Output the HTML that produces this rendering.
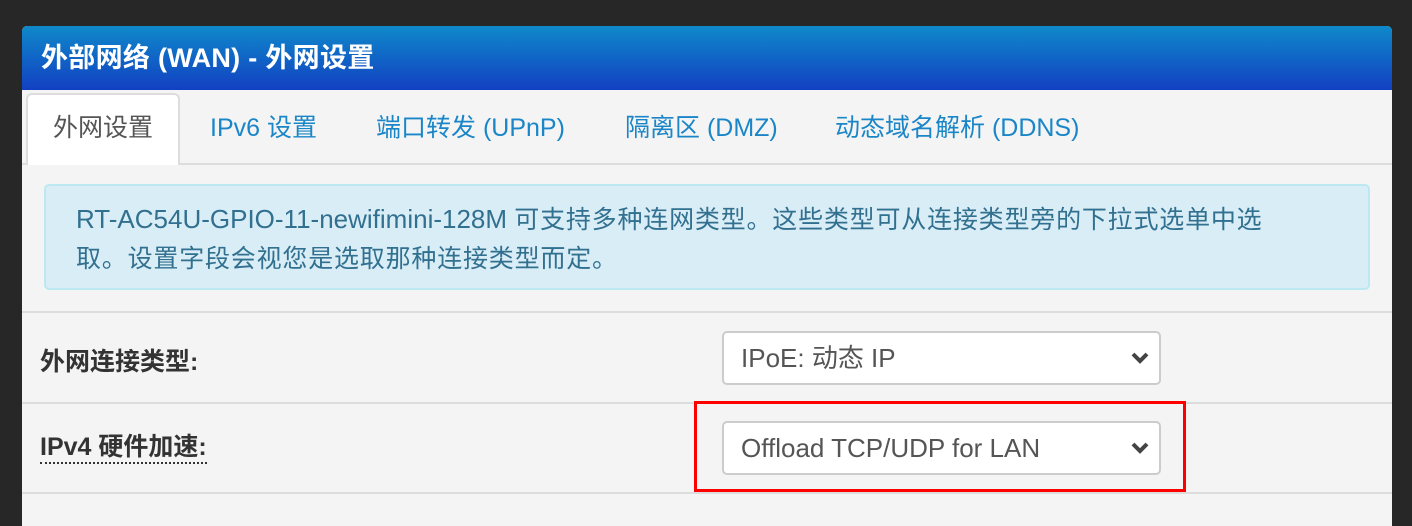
<!DOCTYPE html>
<html><head><meta charset="utf-8"><style>
body{margin:0;width:1412px;height:502px;background:#272727;overflow:hidden;font-family:"Liberation Sans","Noto Sans CJK SC",sans-serif;}
.panel{position:absolute;left:22px;top:26px;width:1370px;height:500px;background:#f4f4f4;border-radius:5px 5px 0 0;overflow:hidden}
.hdr{height:64px;background:linear-gradient(#0f89ca,#1240c2);color:#fff;font-weight:bold;font-size:27px;line-height:64px;padding-left:19px;letter-spacing:0.3px}
.tabs{position:absolute;top:64px;left:0;right:0;height:73px;border-bottom:2px solid #ddd}
.tab{position:absolute;top:18px;font-size:25px;color:#1a86c8}
.act{position:absolute;left:4px;top:3px;width:154px;height:72px;background:#fff;border:2px solid #ddd;border-bottom:none;border-radius:6px 6px 0 0;box-sizing:border-box;color:#555;font-size:25px;text-align:center;line-height:66px}
.alert{position:absolute;left:22px;top:158px;width:1326px;height:106px;box-sizing:border-box;background:#d9edf7;border:2px solid #bce8f1;border-radius:5px;color:#31708f;font-size:26px;line-height:38px;padding:14px 0 14px 30px;white-space:nowrap}
.alert .c{font-size:25px;letter-spacing:0.8px}
.hr{position:absolute;left:0;right:0;height:2px;background:#ddd}
.lbl{position:absolute;left:18px;font-size:25px;font-weight:bold;color:#333}
.sel{position:absolute;left:700px;width:439px;height:54px;box-sizing:border-box;background:#fff;border:2px solid #ccc;border-radius:5px;font-size:26px;color:#555;line-height:50px;padding-left:17px}
.sel svg{position:absolute;right:9px;top:18px}
.red{position:absolute;left:694px;top:401px;width:492px;height:91px;box-sizing:border-box;border:3px solid #f00}
</style></head><body>
<div class="panel">
<div class="hdr">外部网络 (WAN) - 外网设置</div>
<div class="tabs">
<div class="act">外网设置</div>
<div class="tab" style="left:188px">IPv6 设置</div>
<div class="tab" style="left:354px">端口转发 (UPnP)</div>
<div class="tab" style="left:603px">隔离区 (DMZ)</div>
<div class="tab" style="left:813px">动态域名解析 (DDNS)</div>
</div>
<div class="alert">RT-AC54U-GPIO-11-newifimini-128M <span class="c">可支持多种连网类型。这些类型可从连接类型旁的下拉式选单中选</span><br><span class="c">取。设置字段会视您是选取那种连接类型而定。</span></div>
<div class="hr" style="top:285px"></div>
<div class="lbl" style="top:316px">外网连接类型:</div>
<div class="sel" style="top:305px">IPoE: 动态 IP<svg width="20" height="14" viewBox="0 0 20 14"><path d="M3 3l7 7 7-7" stroke="#444" stroke-width="4" fill="none"/></svg></div>
<div class="hr" style="top:376px"></div>
<div class="lbl" style="top:406px;border-bottom:2px dotted #333;line-height:30px">IPv4 硬件加速:</div>
<div class="sel" style="top:395px">Offload TCP/UDP for LAN<svg width="20" height="14" viewBox="0 0 20 14"><path d="M3 3l7 7 7-7" stroke="#444" stroke-width="4" fill="none"/></svg></div>
<div class="hr" style="top:466px"></div>
</div>
<div class="red"></div>
</body></html>
